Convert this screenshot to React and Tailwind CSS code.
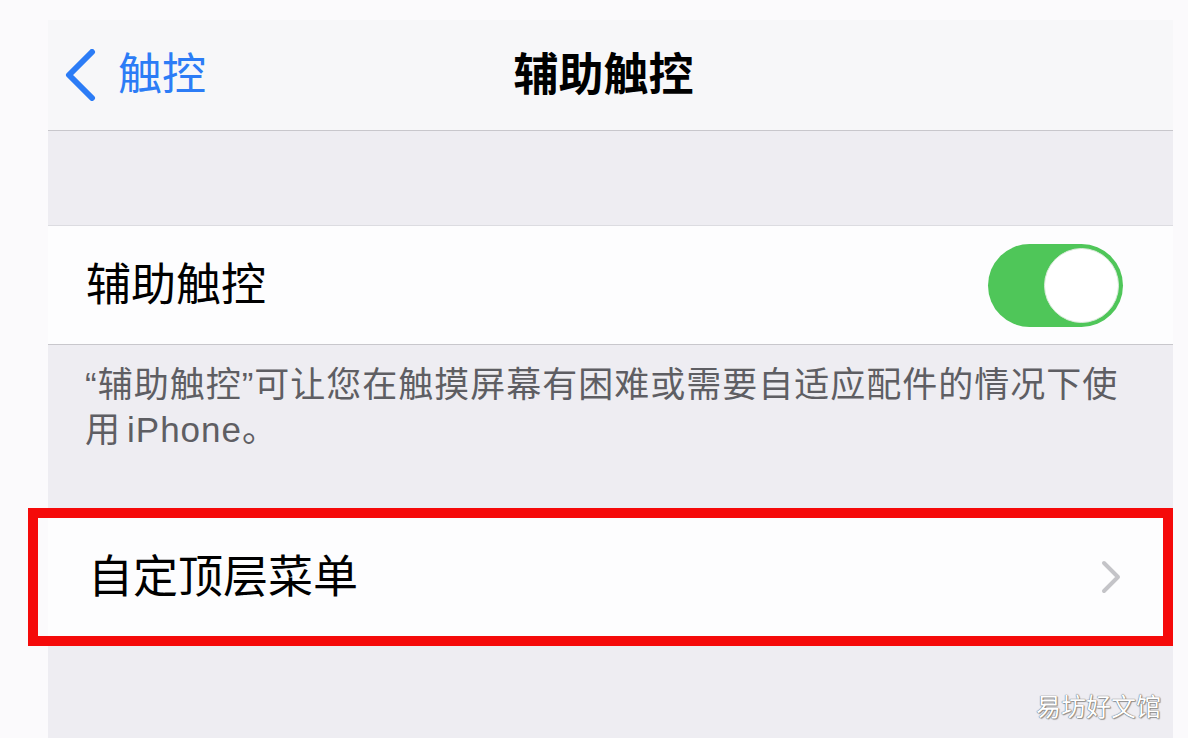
import React from 'react';

const font = { fontFamily: '"Liberation Sans", "Noto Sans CJK SC", sans-serif' };

const Toggle = () => (
  <div className="w-[135px] h-[83px] rounded-full bg-[#4fc659] p-[4px] flex justify-end">
    <div className="w-[75px] h-[75px] rounded-full bg-white border border-[#d9ead9]" />
  </div>
);

const App = () => {
  return (
    <div className="w-[1188px] h-[738px] bg-[#fbfafc] pt-[20px] pl-[48px] pr-[15px] overflow-hidden" style={font}>
      <div className="h-full flex flex-col bg-[#eeedf2]">
        {/* Nav bar */}
        <div className="h-[111px] shrink-0 bg-[#f7f7f9] border-b border-[#c8c7cc] grid grid-cols-[1fr_auto_1fr] items-center">
          <div className="flex items-center pl-[16px] gap-[20px] text-[#2c7cf6]">
            <svg width="34" height="52" viewBox="0 0 34 52" fill="none">
              <path d="M28 3 L5 26 L28 49" stroke="currentColor" strokeWidth="6" strokeLinecap="round" strokeLinejoin="round" />
            </svg>
            <span className="text-[44px] leading-none">触控</span>
          </div>
          <h1 className="text-[45px] leading-none font-semibold text-black mr-[14px]">辅助触控</h1>
          <div />
        </div>

        {/* Gap */}
        <div className="h-[95px] shrink-0 border-b border-[#dcdce1]" />

        {/* Toggle row */}
        <div className="h-[119px] shrink-0 bg-[#fdfdfe] border-b border-[#c8c7cc] flex items-center justify-between pl-[38px] pr-[50px]">
          <span className="text-[45px] leading-none text-black">辅助触控</span>
          <Toggle />
        </div>

        {/* Footer note */}
        <div className="h-[163px] shrink-0 pl-[37px] pr-[20px] pt-[17px] text-[35px] leading-[45px] tracking-[1px] text-[#5e5e63]">
          “辅助触控”可让您在触摸屏幕有困难或需要自适应配件的情况下使
          <br />
          用<span className="ml-[6px]">iPhone</span>。
        </div>

        {/* Highlighted row */}
        <div className="relative h-[138px] shrink-0 bg-[#fdfdfe] flex items-center justify-between pl-[40px] pr-[52px]">
          <span className="text-[45px] leading-none text-black">自定顶层菜单</span>
          <svg width="20" height="34" viewBox="0 0 20 34" fill="none">
            <path d="M3 3 L17 17 L3 31" stroke="#c4c4c8" strokeWidth="4" strokeLinecap="round" strokeLinejoin="round" />
          </svg>
          <div className="absolute left-[-20px] right-0 top-0 bottom-0 border-[10px] border-[#f50a0a]" />
        </div>

        {/* Bottom */}
        <div className="flex-1 flex items-end justify-end pr-[12px] pb-[18px]">
          <span className="text-[25px] leading-none text-white [text-shadow:0_0_1px_#666,0_0_1px_#666,1px_1px_1px_#999]">易坊好文馆</span>
        </div>
      </div>
    </div>
  );
};

export default App;
